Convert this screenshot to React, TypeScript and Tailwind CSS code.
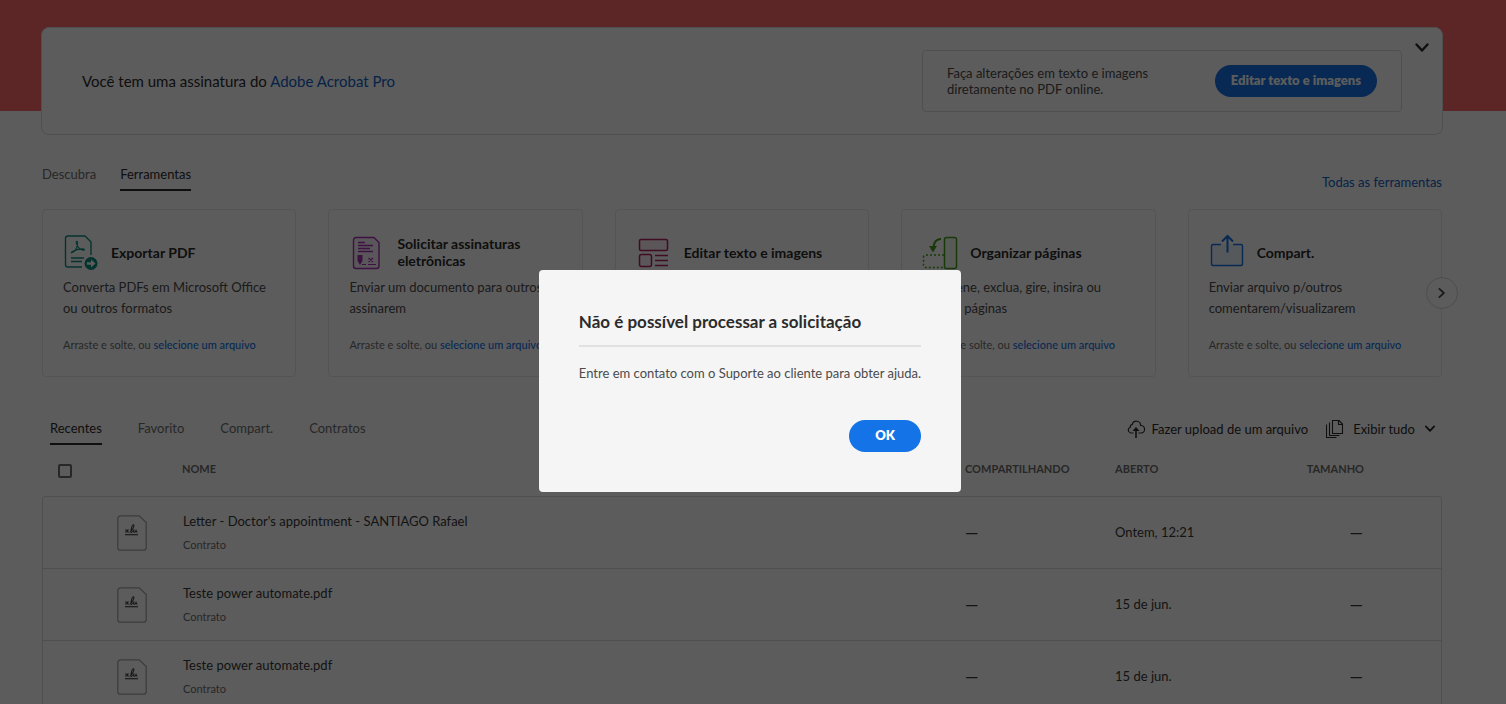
/**
 * Acrobat web home page with the "unable to process" dialog on top.
 */
import React from 'react';

interface Tool {
  id: string;
  title: string;
  description: string;
  icon: React.ReactNode;
}

interface FileRow {
  id: number;
  name: string;
  kind: string;
  opened: string;
}

const ExportIcon = () => (
  <svg className="w-9 h-9" viewBox="0 0 36 36" fill="none" stroke="#0d8f81" strokeWidth="1.4">
    <path d="M19 33H5a2.500 2.500 0 0 1-2.500-2.500V4.500A2.500 2.500 0 0 1 5 2h17l6 6v13" />
    <path d="M9 18.500c4-1 6-7 5.500-10.500-.4-1.300-1.700-1-1.300.7 1 3.800 3.800 7 6.800 7.600 2 .2 2-1.300 0-1.400-4-.1-8 1-10.500 2.600-1.500 1-1.500 1.800-.5 1z" strokeWidth="1.100" />
    <path d="M8 24h13M8 27.500h11" />
    <circle cx="28" cy="29.500" r="6.500" fill="#0d8f81" stroke="none" />
    <path d="M24 29.500h5" stroke="#fff" strokeWidth="2.500" />
    <path d="M28 25.500l4.500 4-4.500 4z" fill="#fff" stroke="none" />
  </svg>
);

const SignIcon = () => (
  <svg className="w-9 h-9" viewBox="0 0 36 36" fill="none" stroke="#a92fb4" strokeWidth="1.400">
    <path d="M7 3.500h18l5 5v23.500a2.500 2.500 0 0 1-2.500 2.500H7A2.500 2.500 0 0 1 4.500 32V6A2.500 2.500 0 0 1 7 3.500z" fill="#faf0fb" />
    <path d="M9 8.500h7M9 11.500h15M9 14.500h12M9 17.500h15" />
    <path d="M8.500 21h5v6l-2.500 4-2.500-4z" fill="#a92fb4" stroke="none" />
    <path d="M13 30.500h4M19 30.500h8M19.500 24l4.500 4M24 24l-4.500 4" strokeWidth="1.200" />
  </svg>
);

const EditIcon = () => (
  <svg className="w-9 h-9" viewBox="0 0 36 36" fill="none" stroke="#b51f60" strokeWidth="1.500">
    <rect x="3.500" y="5.500" width="28" height="11" rx="1.500" fill="#fcf1f6" />
    <rect x="3.500" y="20.500" width="12" height="12" rx="2" fill="#fcf1f6" />
    <path d="M19 21.500h13M19 26.500h13M19 31.500h13" />
  </svg>
);

const OrganizeIcon = () => (
  <svg className="w-9 h-9" viewBox="0 0 36 36" fill="none" stroke="#469f1c" strokeWidth="1.500">
    <rect x="22.500" y="3.500" width="12" height="31" rx="2" fill="#f0f8eb" />
    <path d="M22 21H3.500a2 2 0 0 0-2 2v8.500a2 2 0 0 0 2 2h18" strokeDasharray="2 2" />
    <path d="M19 5c-5 0-7 3.500-7.500 8" strokeWidth="2.200" />
    <path d="M7 12h8L11 18.500z" fill="#469f1c" stroke="none" />
  </svg>
);

const ShareIcon = () => (
  <svg className="w-9 h-9" viewBox="0 0 36 36" fill="none" stroke="#1473e6" strokeWidth="1.400">
    <path d="M12 10.500H4A1.500 1.500 0 0 0 2.500 12v18A1.500 1.500 0 0 0 4 31.500h28a1.500 1.500 0 0 0 1.500-1.500V12a1.500 1.500 0 0 0-1.500-1.500h-8" fill="#eef5fd" />
    <path d="M18.500 18.500V3M13 7.500L18.500 2l5.500 5.500" strokeWidth="2" />
  </svg>
);

const ChevronDown = ({ className }: { className: string }) => (
  <svg className={className} viewBox="0 0 16 16" fill="none" stroke="currentColor" strokeWidth="2.400" strokeLinecap="round" strokeLinejoin="round">
    <path d="M2.500 4.500l5.500 6 5.500-6" />
  </svg>
);

const UploadCloudIcon = () => (
  <svg className="w-[18px] h-[18px]" viewBox="0 0 18 18" fill="none" stroke="currentColor" strokeWidth="1.200">
    <path d="M6.500 13H3.800A3 3 0 0 1 3.300 7.200 2.300 2.300 0 0 1 5.300 4.500a4.200 4.200 0 0 1 8.300 1A3.700 3.700 0 0 1 14 13h-2.500" />
    <path d="M9 18V9" strokeWidth="1.600" />
    <path d="M5.500 11L9 7l3.500 4z" fill="currentColor" stroke="none" />
  </svg>
);

const PagesIcon = () => (
  <svg className="w-[18px] h-[18px]" viewBox="0 0 18 18" fill="none" stroke="currentColor" strokeWidth="1.100">
    <path d="M6.500.500h6.500l3.500 3.500v9.500h-10z" />
    <path d="M12.500.500v4h4M3.500 2.500v13h10M.500 4.500v13h10" />
  </svg>
);

const ContractIcon = () => (
  <svg className="w-[30px] h-9" viewBox="0 0 30 36" fill="none">
    <path d="M3.500.8h18.700L29.200 7.500v25a2.700 2.700 0 0 1-2.700 2.700h-23A2.700 2.700 0 0 1 .8 32.500v-29A2.700 2.700 0 0 1 3.500.8z" stroke="#a8a8a8" strokeWidth="1.300" />
    <path d="M8.500 14.500l3 3M11.500 14.500l-3 3M12.500 17.500c2.500-1 5.500-7.500 4-7.800s-3.500 7.300-2 7.700c1 .3 2-2 2.500-3-.5 1.500-.5 3 .5 3s1.500-2 1.700-2.700c-.2 1.500 0 2.500 1.300 2.300" stroke="#4b4b4b" strokeWidth="1.100" />
    <path d="M8 19.700h13" stroke="#4b4b4b" strokeWidth="1.200" />
  </svg>
);

const tools: Tool[] = [
  { id: 'export', title: 'Exportar PDF', description: 'Converta PDFs em Microsoft Office ou outros formatos', icon: <ExportIcon /> },
  { id: 'sign', title: 'Solicitar assinaturas eletrônicas', description: 'Enviar um documento para outros assinarem', icon: <SignIcon /> },
  { id: 'edit', title: 'Editar texto e imagens', description: 'Edite texto e imagens', icon: <EditIcon /> },
  { id: 'organize', title: 'Organizar páginas', description: 'Reordene, exclua, gire, insira ou extraia páginas', icon: <OrganizeIcon /> },
  { id: 'share', title: 'Compart.', description: 'Enviar arquivo p/outros comentarem/visualizarem', icon: <ShareIcon /> },
];

const files: FileRow[] = [
  { id: 1, name: "Letter - Doctor's appointment - SANTIAGO Rafael", kind: 'Contrato', opened: 'Ontem, 12:21' },
  { id: 2, name: 'Teste power automate.pdf', kind: 'Contrato', opened: '15 de jun.' },
  { id: 3, name: 'Teste power automate.pdf', kind: 'Contrato', opened: '15 de jun.' },
];

const SubscriptionBanner = () => (
  <section className="relative ml-[41px] mr-[63px] flex items-center justify-between rounded-lg border border-[#dcdcdc] bg-white px-10 py-[22px]">
    <p className="text-[15px] text-[#2c2c2c]">
      Você tem uma assinatura do <a href="#plan" className="text-[#1262c4]">Adobe Acrobat Pro</a>
    </p>
    <div className="flex w-[480px] items-center justify-between rounded-sm border border-[#dcdcdc] px-6 py-[14px]">
      <p className="w-[220px] text-[13px] leading-4 text-[#4b4b4b]">Faça alterações em texto e imagens diretamente no PDF online.</p>
      <button className="h-8 whitespace-nowrap rounded-full bg-[#1473e6] px-4 text-[13px] font-extrabold text-white">
        Editar texto e imagens
      </button>
    </div>
    <button aria-label="Recolher" className="absolute right-3 top-3 text-[#2c2c2c]">
      <ChevronDown className="w-4 h-4" />
    </button>
  </section>
);

const ToolCard = ({ tool }: { tool: Tool }) => (
  <article className="min-w-0 flex-1 rounded border border-[#e8e8e8] bg-white px-5 pb-[21px] pt-6">
    <div className="flex h-9 items-center gap-3">
      <span className="shrink-0">{tool.icon}</span>
      <h3 className="text-sm font-bold leading-[17px] text-[#2c2c2c]">{tool.title}</h3>
    </div>
    <p className="mt-[7px] h-[42px] text-[13px] leading-[21px] text-[#4b4b4b]">{tool.description}</p>
    <p className="mt-4 whitespace-nowrap text-[11px] leading-5 text-[#6e6e6e]">
      Arraste e solte, ou <a href={`#${tool.id}`} className="font-medium text-[#1473e6]">selecione um arquivo</a>
    </p>
  </article>
);

const ToolsSection = () => (
  <section className="ml-[42px] mr-16 mt-[29px]">
    <div className="flex items-start justify-between text-[13px] leading-5">
      <nav className="flex gap-6">
        <button className="pb-[7px] text-[#6e6e6e]">Descubra</button>
        <button className="border-b-2 border-[#2c2c2c] pb-[5px] text-[#2c2c2c]">Ferramentas</button>
      </nav>
      <a href="#tools" className="mt-2 text-[#1262c4]">Todas as ferramentas</a>
    </div>
    <div className="relative mt-[17px] flex gap-8">
      {tools.map((tool) => (
        <ToolCard key={tool.id} tool={tool} />
      ))}
      <button
        aria-label="Próximo"
        className="absolute -right-4 top-[68px] flex h-8 w-8 items-center justify-center rounded-full border border-[#d5d5d5] bg-white text-[#4b4b4b]"
      >
        <ChevronDown className="w-3 h-3 -rotate-90" />
      </button>
    </div>
  </section>
);

const FilesSection = () => (
  <section className="ml-[42px] mr-16 mt-[41px]">
    <div className="flex items-start justify-between pl-2 pr-[6px] text-[13px] leading-5 text-[#2c2c2c]">
      <nav className="flex gap-9 text-[#6e6e6e]">
        <button className="border-b-2 border-[#2c2c2c] pb-[5px] text-[#2c2c2c]">Recentes</button>
        <button className="pb-[7px]">Favorito</button>
        <button className="pb-[7px]">Compart.</button>
        <button className="pb-[7px]">Contratos</button>
      </nav>
      <div className="flex gap-[18px] pt-px">
        <button className="flex items-center gap-[7px]">
          <UploadCloudIcon />
          Fazer upload de um arquivo
        </button>
        <button className="flex items-center gap-[9px]">
          <PagesIcon />
          Exibir tudo
          <ChevronDown className="w-3 h-3" />
        </button>
      </div>
    </div>

    <table className="w-full table-fixed border-separate border-spacing-0 text-left text-[13px] text-[#383838]">
      <colgroup>
        <col className="w-[75px]" />
        <col className="w-[65px]" />
        <col />
        <col className="w-[150px]" />
        <col className="w-[175px]" />
        <col className="w-[152px]" />
      </colgroup>
      <thead>
        <tr className="h-[51px] text-[11px] font-bold text-[#6e6e6e]">
          <th className="pl-4">
            <input type="checkbox" aria-label="Selecionar tudo" className="block h-[14px] w-[14px] appearance-none rounded-[2px] border-2 border-[#6e6e6e]" />
          </th>
          <td />
          <th className="pb-[2px]">NOME</th>
          <th className="pb-[2px]">COMPARTILHANDO</th>
          <th className="pb-[2px]">ABERTO</th>
          <th className="pb-[2px] pr-[78px] text-right">TAMANHO</th>
        </tr>
      </thead>
      <tbody>
        {files.map((file) => (
          <tr key={file.id} className="group h-[72px]">
            <td className="border-l border-t border-[#dcdcdc] group-first:rounded-tl" />
            <td className="border-t border-[#dcdcdc]"><ContractIcon /></td>
            <td className="border-t border-[#dcdcdc] pl-px">
              <p className="leading-5">{file.name}</p>
              <p className="mt-1 text-[11px] leading-5 text-[#6e6e6e]">{file.kind}</p>
            </td>
            <td className="border-t border-[#dcdcdc] text-[17px] leading-5">—</td>
            <td className="border-t border-[#dcdcdc]">{file.opened}</td>
            <td className="border-r border-t border-[#dcdcdc] pr-[78px] text-right text-[17px] leading-5 group-first:rounded-tr">—</td>
          </tr>
        ))}
      </tbody>
    </table>
  </section>
);

const ErrorDialog = () => (
  <div className="fixed inset-0 flex items-start justify-center bg-black/64 pr-[6px] pt-[270px]">
    <div role="dialog" aria-modal="true" aria-labelledby="dialog-title" className="rounded bg-[#f5f5f5] p-10">
      <h2 id="dialog-title" className="border-b-2 border-[#e1e1e1] pb-[11px] text-[17px] font-bold leading-6 text-[#2c2c2c]">
        Não é possível processar a solicitação
      </h2>
      <p className="mt-4 text-[13px] leading-5 text-[#4b4b4b]">Entre em contato com o Suporte ao cliente para obter ajuda.</p>
      <div className="mt-[37px] flex justify-end">
        <button className="h-8 w-[72px] rounded-full bg-[#1473e6] text-[13px] font-extrabold text-white">OK</button>
      </div>
    </div>
  </div>
);

export default function App() {
  return (
    <div className="h-screen overflow-hidden bg-white font-['Lato',sans-serif]">
      <main className="bg-[linear-gradient(#ff6b6b_111px,transparent_111px)] pt-[27px]">
        <SubscriptionBanner />
        <ToolsSection />
        <FilesSection />
      </main>
      <ErrorDialog />
    </div>
  );
}
